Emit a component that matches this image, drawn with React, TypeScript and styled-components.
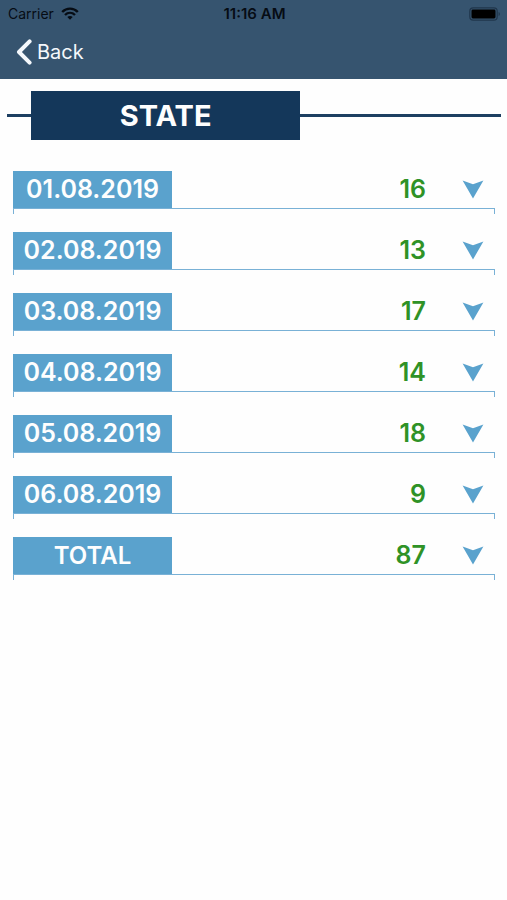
import React from "react";
import styled, { createGlobalStyle } from "styled-components";

const GlobalStyle = createGlobalStyle`
  *, *::before, *::after { box-sizing: border-box; }
  body {
    margin: 0;
    background: #fefefe;
    font-family: Inter, "Liberation Sans", sans-serif;
  }
  button { font: inherit; color: inherit; background: none; border: 0; padding: 0; cursor: pointer; }
`;

const Header = styled.header`
  background: #36546f;
  padding-bottom: 5px;
`;

const StatusBar = styled.div`
  display: grid;
  grid-template-columns: 1fr auto 1fr;
  align-items: center;
  height: 27px;
  padding: 0 6px 0 8px;
  color: #060c14;
  font-size: 14px;
  line-height: 20px;
`;

const Carrier = styled.div`
  display: flex;
  align-items: center;
  gap: 7px;
`;

const Clock = styled.time`
  font-size: 15px;
  font-weight: 600;
`;

const Battery = styled.svg`
  justify-self: end;
`;

const NavBar = styled.nav`
  display: flex;
  height: 47px;
  padding: 3px 0 0 16px;
`;

const BackButton = styled.button`
  && {
    display: flex;
    align-items: center;
    gap: 5px;
    color: #f4f8fc;
    font-size: 20px;
    line-height: 28px;
  }
`;

const TitleBar = styled.div`
  display: flex;
  align-items: center;
  margin: 12px 6px 0 7px;

  &::before, &::after {
    content: "";
    height: 3px;
    background: #1d3f61;
  }
  &::before { width: 24px; }
  &::after { flex: 1; }
`;

const Title = styled.h1`
  width: 54.5%;
  margin: 0;
  padding: 7px 0 6px;
  background: #14375a;
  color: #fefefe;
  font-size: 29px;
  font-weight: 700;
  line-height: 36px;
  text-align: center;
`;

const List = styled.ul`
  display: flex;
  flex-direction: column;
  gap: 18px;
  margin: 0;
  padding: 31px 12px 0 13px;
  list-style: none;
`;

const Row = styled.button`
  && {
    display: flex;
    align-items: stretch;
    width: 100%;
    font-size: 25px;
    font-weight: 600;
    line-height: 37px;
  }
`;

const RowLabel = styled.span<{ $summary: boolean }>`
  width: 33%;
  background: #5aa2cd;
  color: #fefefe;
  font-size: ${({ $summary }) => ($summary ? "24px" : "25px")};
  text-align: center;
`;

const Count = styled.span`
  flex: 1;
  padding-right: 36px;
  color: #2f9226;
  text-align: right;
`;

const Arrow = styled.svg`
  align-self: center;
  margin-right: 11px;
`;

const Bracket = styled.div`
  height: 6px;
  border: 1px solid #79b1d6;
  border-bottom: 0;
`;

const entries = [
  { label: "01.08.2019", count: 16 },
  { label: "02.08.2019", count: 13 },
  { label: "03.08.2019", count: 17 },
  { label: "04.08.2019", count: 14 },
  { label: "05.08.2019", count: 18 },
  { label: "06.08.2019", count: 9 },
  { label: "TOTAL", count: 87, summary: true },
];

export default function App() {
  return (
    <>
      <GlobalStyle />
      <Header>
        <StatusBar>
          <Carrier>
            <span>Carrier</span>
            <svg width="18" height="13" viewBox="0 0 18 13" fill="none" stroke="currentColor" strokeWidth="2.4" aria-hidden="true">
              <path d="M1.2 5C5.6.5 12.4.5 16.8 5" />
              <path d="M4 8c2.9-2.8 7.1-2.8 10 0" />
              <path d="M9 12.8 6.3 10.1c1.5-1.4 3.9-1.4 5.4 0z" fill="currentColor" stroke="none" />
            </svg>
          </Carrier>
          <Clock>11:16 AM</Clock>
          <Battery width="32" height="14" viewBox="0 0 32 14" aria-hidden="true">
            <rect x="0.8" y="0.8" width="27.4" height="12.4" rx="3.4" fill="none" stroke="#20364c" strokeWidth="1.2" />
            <rect x="2.5" y="2.5" width="24" height="9" rx="1.4" fill="#000" />
            <path d="M29.6 5v4c1.7-.7 1.7-3.3 0-4z" fill="#20364c" />
          </Battery>
        </StatusBar>
        <NavBar>
          <BackButton type="button">
            <svg width="16" height="26" viewBox="0 0 16 26" fill="none" stroke="currentColor" strokeWidth="4" strokeLinejoin="round" strokeLinecap="round" aria-hidden="true">
              <path d="M13.6 2.4 3 13l10.6 10.6" />
            </svg>
            Back
          </BackButton>
        </NavBar>
      </Header>
      <main>
        <TitleBar>
          <Title>STATE</Title>
        </TitleBar>
        <List>
          {entries.map(({ label, count, summary = false }) => (
            <li key={label}>
              <Row type="button" aria-expanded={false}>
                <RowLabel $summary={summary}>{label}</RowLabel>
                <Count>{count}</Count>
                <Arrow width="22" height="19" viewBox="0 0 22 19" fill="#5aa2cd" aria-hidden="true">
                  <path d="M.6.6 11 4.2 21.4.6 11 18.4z" />
                </Arrow>
              </Row>
              <Bracket />
            </li>
          ))}
        </List>
      </main>
    </>
  );
}
